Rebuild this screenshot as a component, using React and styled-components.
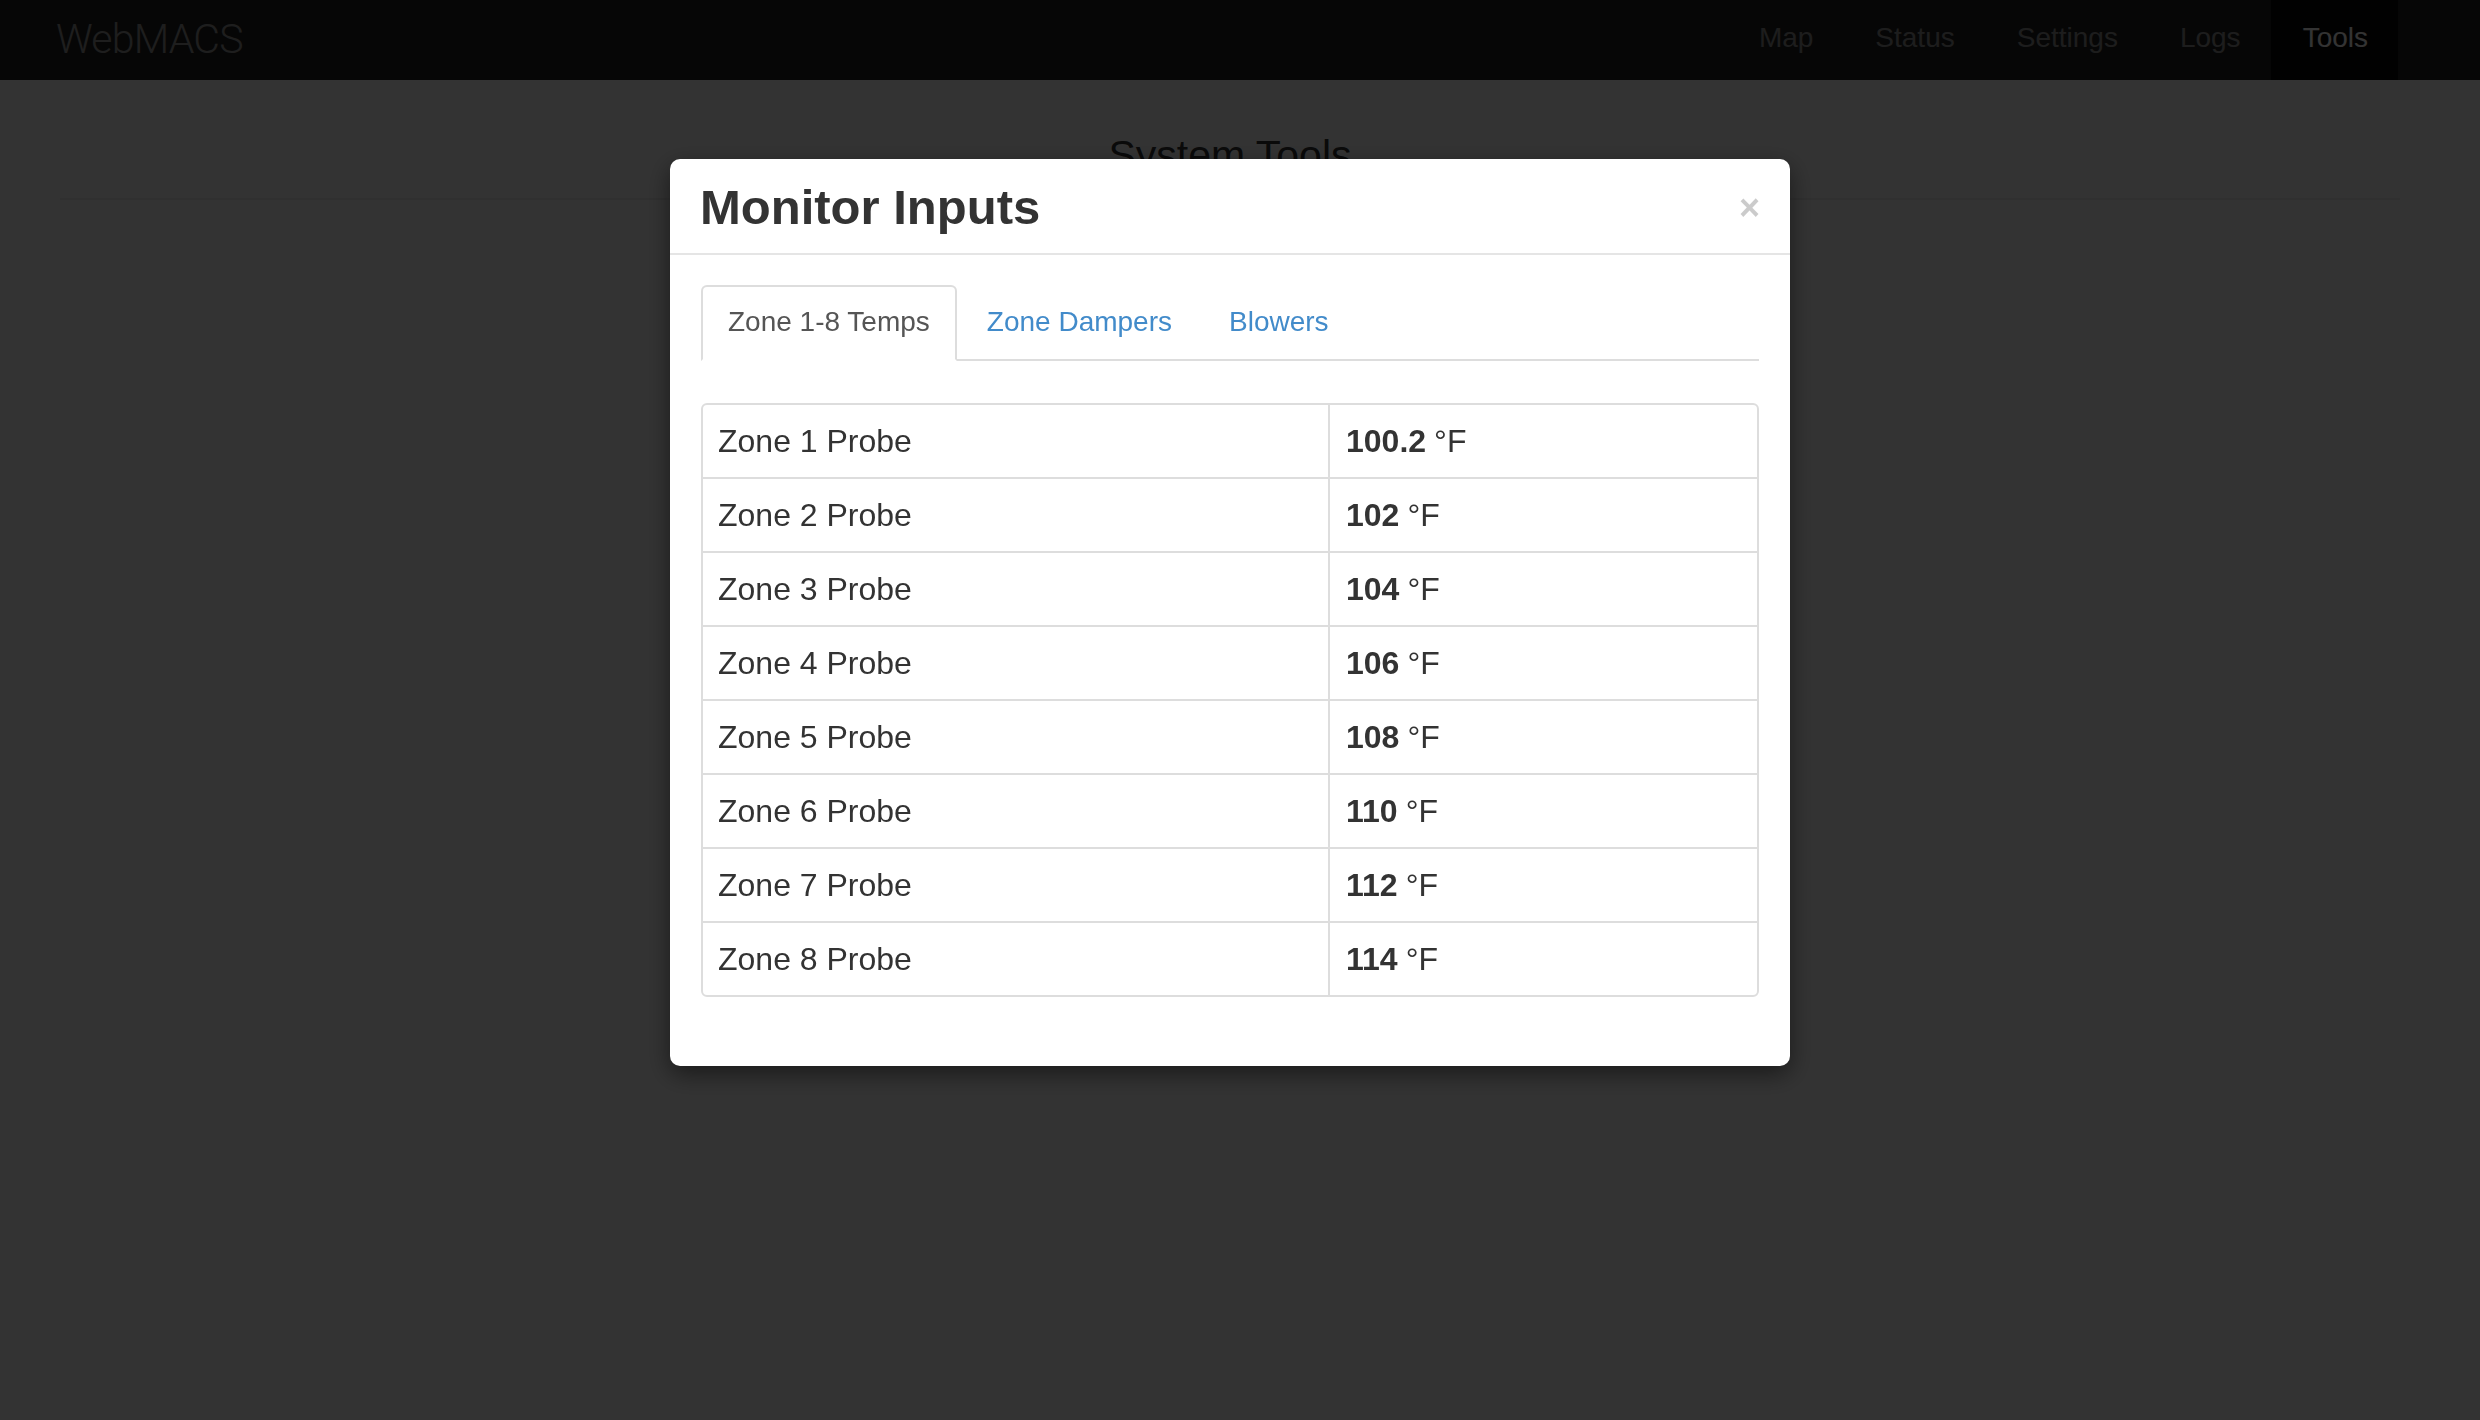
import React from 'react';
import styled, { createGlobalStyle } from 'styled-components';

const GlobalStyle = createGlobalStyle`
	html, body {
		margin: 0;
		padding: 0;
		background: #fff;
		font-family: "Liberation Sans", Arial, Helvetica, sans-serif;
		color: #333;
	}
	*, *::before, *::after {
		box-sizing: border-box;
	}
`;

const Navbar = styled.nav`
	height: 80px;
	background: #222;
	display: flex;
	align-items: stretch;
	justify-content: space-between;
	padding: 0 82px 0 56px;
`;

const Brand = styled.div`
	font-family: Roboto, "Liberation Sans", sans-serif;
	font-weight: 300;
	font-size: 41px;
	line-height: 78px;
	color: #969696;
	letter-spacing: -0.8px;
`;

const NavList = styled.ul`
	display: flex;
	margin: 0;
	padding: 0;
	list-style: none;
`;

const NavItem = styled.li`
	padding: 0 30px 4px 32px;
	font-size: 28px;
	line-height: 76px;
	color: ${ p => ( p.active ? '#fff' : '#929292' ) };
	background: ${ p => ( p.active ? '#080808' : 'transparent' ) };
`;

const Page = styled.main`
	margin-right: 20px;
	padding: 0 60px 0 60px;
`;

const PageTitle = styled.h1`
	margin: 53px 0 0;
	text-align: center;
	font-size: 41px;
	font-weight: 400;
	line-height: 1.1;
	color: #333;
`;

const Rule = styled.hr`
	margin: 20px 0 0;
	border: 0;
	border-top: 2px solid #eee;
`;

const Backdrop = styled.div`
	position: fixed;
	inset: 0;
	background: rgba(0, 0, 0, 0.8);
	display: flex;
	justify-content: center;
	align-items: flex-start;
	padding: 159px 20px 0 0;
`;

const Modal = styled.div`
	width: 1120px;
	background: #fff;
	border-radius: 10px;
	box-shadow: 0 8px 24px rgba(0, 0, 0, 0.5);
`;

const ModalHeader = styled.div`
	display: flex;
	align-items: center;
	justify-content: space-between;
	padding: 22px 30px 19px 30px;
	border-bottom: 2px solid #e5e5e5;
`;

const ModalTitle = styled.h4`
	margin: 0;
	font-size: 49px;
	font-weight: 700;
	line-height: 53px;
	color: #333;
`;

const CloseButton = styled.button`
	border: 0;
	background: none;
	padding: 0;
	font-family: "Liberation Sans", Arial, sans-serif;
	font-size: 36px;
	font-weight: 700;
	line-height: 1;
	color: #000;
	opacity: 0.2;
	cursor: pointer;
`;

const ModalBody = styled.div`
	padding: 30px 31px 31px;
`;

const TabBar = styled.ul`
	display: flex;
	margin: 0;
	padding: 0;
	list-style: none;
	border-bottom: 2px solid #ddd;
`;

const Tab = styled.li`
	margin: 0 3px -2px 0;
	padding: 19px 25px 21px;
	font-size: 28px;
	line-height: 32px;
	border: 2px solid transparent;
	border-radius: 6px 6px 0 0;
	color: ${ p => ( p.active ? '#555' : '#428bca' ) };
	background: ${ p => ( p.active ? '#fff' : 'transparent' ) };
	border-color: ${ p => ( p.active ? '#ddd #ddd transparent' : 'transparent' ) };
`;

const Table = styled.div`
	margin: 42px 0 38px;
	border: 2px solid #ddd;
	border-radius: 6px;
	overflow: hidden;
`;

const Row = styled.div`
	display: grid;
	grid-template-columns: 625px 1fr;
	height: 74px;
	border-top: 2px solid #ddd;
	&:first-child {
		height: 72px;
		border-top: 0;
	}
`;

const Cell = styled.div`
	display: flex;
	align-items: center;
	padding: 0 15px;
	font-size: 32px;
	color: #333;
	& + & {
		border-left: 2px solid #ddd;
		padding-left: 16px;
	}
`;

const Value = styled.strong`
	font-weight: 700;
	margin-right: 8px;
`;

const probes = [ '100.2', '102', '104', '106', '108', '110', '112', '114' ];

export default function App() {
	return (
		<>
			<GlobalStyle />
			<Navbar>
				<Brand>WebMACS</Brand>
				<NavList>
					<NavItem>Map</NavItem>
					<NavItem>Status</NavItem>
					<NavItem>Settings</NavItem>
					<NavItem>Logs</NavItem>
					<NavItem active>Tools</NavItem>
				</NavList>
			</Navbar>
			<Page>
				<PageTitle>System Tools</PageTitle>
				<Rule />
			</Page>
			<Backdrop>
				<Modal>
					<ModalHeader>
						<ModalTitle>Monitor Inputs</ModalTitle>
						<CloseButton>×</CloseButton>
					</ModalHeader>
					<ModalBody>
						<TabBar>
							<Tab active>Zone 1-8 Temps</Tab>
							<Tab>Zone Dampers</Tab>
							<Tab>Blowers</Tab>
						</TabBar>
						<Table>
							{ probes.map( ( v, i ) => (
								<Row key={ i }>
									<Cell>Zone { i + 1 } Probe</Cell>
									<Cell><Value>{ v }</Value>°F</Cell>
								</Row>
							) ) }
						</Table>
					</ModalBody>
				</Modal>
			</Backdrop>
		</>
	);
}
